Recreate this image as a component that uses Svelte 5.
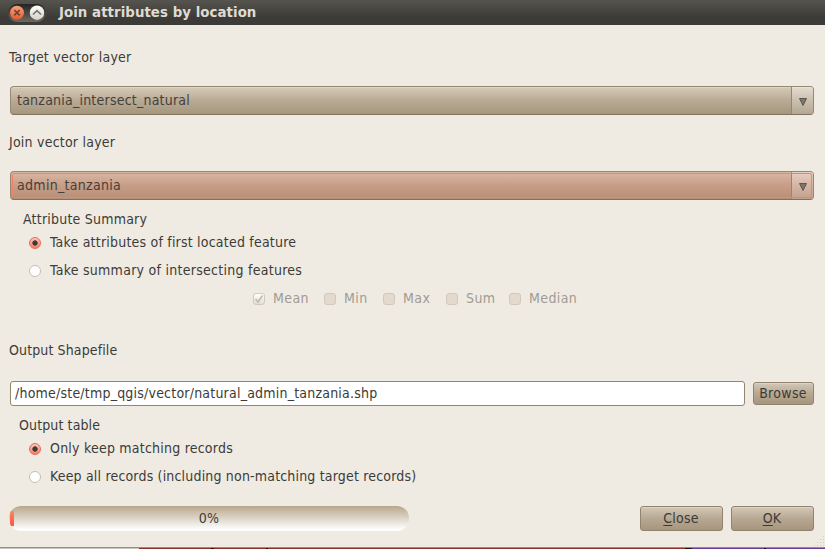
<script>
  const combos = [
    { label: 'Target vector layer', value: 'tanzania_intersect_natural', focus: false },
    { label: 'Join vector layer', value: 'admin_tanzania', focus: true },
  ];
  const stats = [
    { name: 'Mean', left: 253, checked: true },
    { name: 'Min', left: 324, checked: false },
    { name: 'Max', left: 383, checked: false },
    { name: 'Sum', left: 446, checked: false },
    { name: 'Median', left: 509, checked: false },
  ];
  const widths = stats.map((s, i) => (i < 4 ? stats[i + 1].left - s.left : 80));
</script>

{#snippet radio(text, on, spacing)}
  <div class="radio"><i class:on></i><span style="letter-spacing: {spacing}px">{text}</span></div>
{/snippet}

<div class="window">
  <header>
    <svg width="40" height="18" viewBox="0 0 40 18">
      <defs>
        <linearGradient id="pill" x2="0" y2="1"><stop stop-color="#252420" /><stop offset="1" stop-color="#6b6a65" /></linearGradient>
        <linearGradient id="close" x2="0" y2="1"><stop stop-color="#f7a27c" /><stop offset="1" stop-color="#e8592b" /></linearGradient>
        <linearGradient id="shade" x2="0" y2="1"><stop stop-color="#fff" /><stop offset="1" stop-color="#d7d2c5" /></linearGradient>
      </defs>
      <rect x="0" y="0" width="38" height="18" rx="9" fill="url(#pill)" />
      <circle cx="9" cy="8.7" r="7" fill="url(#close)" />
      <path d="M6.3 6l5.4 5.4m0-5.4l-5.4 5.4" stroke="#6b4534" stroke-width="1.7" fill="none" />
      <circle cx="29" cy="8.7" r="7.2" fill="url(#shade)" />
      <path d="M25 10.5l4-3.8 4 3.8" stroke="#77756e" stroke-width="1.7" fill="none" />
    </svg>
    <b>Join attributes by location</b>
  </header>
  <main>
    {#each combos as c}
      <div class="label">{c.label}</div>
      <div class="combo" class:focus={c.focus}>
        <span>{c.value}</span>
        <div class="drop"><svg width="8" height="8" viewBox="0 0 8 8"><path d="M0.5 .5h7L4 7.5z" fill="#7b756a" stroke="#5d584f" stroke-width="1" /></svg></div>
      </div>
    {/each}
    <div class="group summary">Attribute Summary</div>
    {@render radio('Take attributes of first located feature', true, 0.21)}
    {@render radio('Take summary of intersecting features', false, 0.27)}
    <div class="stats">
      {#each stats as s, i}
        <div class="stat" style="width: {widths[i]}px">
          <i class:checked={s.checked}>
            {#if s.checked}<svg width="10" height="10" viewBox="0 0 10 10"><path d="M1.5 5l2.5 3L8.5 1.5" fill="none" stroke="#c3bcb0" stroke-width="1.8" /></svg>{/if}
          </i>
          <span>{s.name}</span>
        </div>
      {/each}
    </div>
    <div class="label out">Output Shapefile</div>
    <div class="file">
      <div class="input">/home/ste/tmp_qgis/vector/natural_admin_tanzania.shp</div>
      <button class="browse">Browse</button>
    </div>
    <div class="group table">Output table</div>
    {@render radio('Only keep matching records', true, 0.22)}
    {@render radio('Keep all records (including non-matching target records)', false, 0.18)}
    <footer>
      <div class="progress"><i></i>0%</div>
      <button><span><u>C</u>lose</span></button>
      <button><span><u>O</u>K</span></button>
    </footer>
  </main>
  <svg class="grip" width="12" height="12" viewBox="0 0 12 12" fill="#d3cbbd">
    {#each [0, 1, 2, 3] as r}
      {#each Array(r + 1) as _, k}<rect x={10 - k * 3} y={1 + r * 3} width="1" height="1" />{/each}
    {/each}
  </svg>
  <div class="behind"></div>
</div>

<style>
  .window { position: relative; box-sizing: border-box; width: 825px; height: 549px; overflow: hidden; background: #efebe3; color: #3c3b37; font: 14px/20px "DejaVu Sans Condensed", "DejaVu Sans", sans-serif; font-stretch: condensed; letter-spacing: 0.22px; display: flex; flex-direction: column; }
  header { height: 25px; flex: none; display: flex; align-items: center; padding-left: 8px; background: linear-gradient(#55544e, #3c3b37 70%); color: #dfdbd2; }
  header b { margin-left: 11px; font: bold 13.33px/20px "DejaVu Sans", sans-serif; letter-spacing: 0.06px; font-stretch: normal; }
  main { flex: 1; padding: 22px 11px 0 9px; }
  .label { height: 20px; margin-bottom: 19px; }
  .combo { position: relative; box-sizing: border-box; height: 29px; margin: 0 0 17px 1px; border: 1px solid #958873; border-bottom-color: #7f725e; border-radius: 4px; background: linear-gradient(#d5cab9, #b9aa94 50%, #a6967e); display: flex; justify-content: space-between; padding-left: 6px; line-height: 27px; box-shadow: inset 0 1px #ded5c8; color: #43413b; }
  .combo.focus { background: linear-gradient(#dab7a5, #c79d86 50%, #b68e76); box-shadow: none; margin-bottom: 9px; letter-spacing: 0.3px; }
  .combo.focus::after { content: ""; position: absolute; inset: 1px; border: 1px solid #f0816a; border-radius: 2px; }
  .drop { width: 22px; box-sizing: border-box; border-left: 1px solid #958873; display: flex; align-items: center; justify-content: center; padding-left: 1px; padding-top: 3px; background: linear-gradient(#ffffff55, #ffffff28); }
  .group { height: 20px; }
  .summary { margin-left: 14px; margin-bottom: 3px; }
  .radio { display: flex; align-items: center; height: 20px; margin: 0 0 8px 20px; }
  .radio i { box-sizing: border-box; width: 12px; height: 12px; border-radius: 50%; border: 1px solid #c8bead; background: #fff; margin: 1px 9px 0 0; }
  .radio i.on { border-color: #e66c55; background: radial-gradient(circle, #3c3b37 0 2.3px, transparent 3px), linear-gradient(#f9c5b8, #fb7a64); }
  .stats { display: flex; margin-left: 244px; height: 20px; color: #a09b93; letter-spacing: 0.4px; }
  .stat { display: flex; align-items: center; }
  .stat i { box-sizing: border-box; width: 12px; height: 12px; border: 1px solid #d3c8b9; border-radius: 3px; background: #e3dacd; margin: 1px 8px 0 0; display: flex; }
  .stat i.checked { background: linear-gradient(#fff, #e3ddd2); }
  .out { margin: 32px 0 21px; letter-spacing: 0.12px; }
  .file { display: flex; height: 25px; margin-left: 1px; gap: 8px; }
  .input { flex: 1; box-sizing: border-box; border: 1px solid #93866f; border-radius: 3px; background: #fff; padding-left: 4px; line-height: 22px; letter-spacing: 0.21px; }
  button { box-sizing: border-box; margin: 0; padding: 0 1px 1px 0; border: 1px solid #91846f; border-radius: 3px; width: 83px; height: 25px; font: inherit; letter-spacing: inherit; color: inherit; background: linear-gradient(#d3c8b7, #b7a892 50%, #a6967e); box-shadow: inset 0 1px #ddd4c6; line-height: 22px; }
  .browse { width: 61px; height: 23px; margin-top: 1px; line-height: 20px; letter-spacing: 0.3px; }
  .table { margin: 9px 0 3px 10px; letter-spacing: 0.12px; }
  u { text-underline-offset: 2px; }
  footer { display: flex; margin-top: 20px; }
  .progress { position: relative; width: 400px; height: 25px; margin-right: 231px; border-radius: 12px; overflow: hidden; text-align: center; line-height: 24px; background: linear-gradient(#b9a78c, #fff 95%); }
  .progress i { position: absolute; left: 1px; top: 5px; width: 4px; height: 15px; background: linear-gradient(#ff8468, #f85a3d); }
  footer button + button { margin-left: 8px; }
  .grip { position: absolute; right: 0; bottom: 2px; }
  .behind { position: absolute; left: 0; right: 0; bottom: 0; height: 1px; border-top: 1px solid #a38d6b; background: linear-gradient(90deg, #c9c5bd 0 139px, #8a3028 139px 211px, #15120f 211px 214px, #8a3028 214px 266px, #15120f 266px 268px, #8a3028 268px 685px, #15120f 685px 692px, #6c3b92 692px 764px, #15120f 764px 766px, #6c3b92 766px); }
</style>
